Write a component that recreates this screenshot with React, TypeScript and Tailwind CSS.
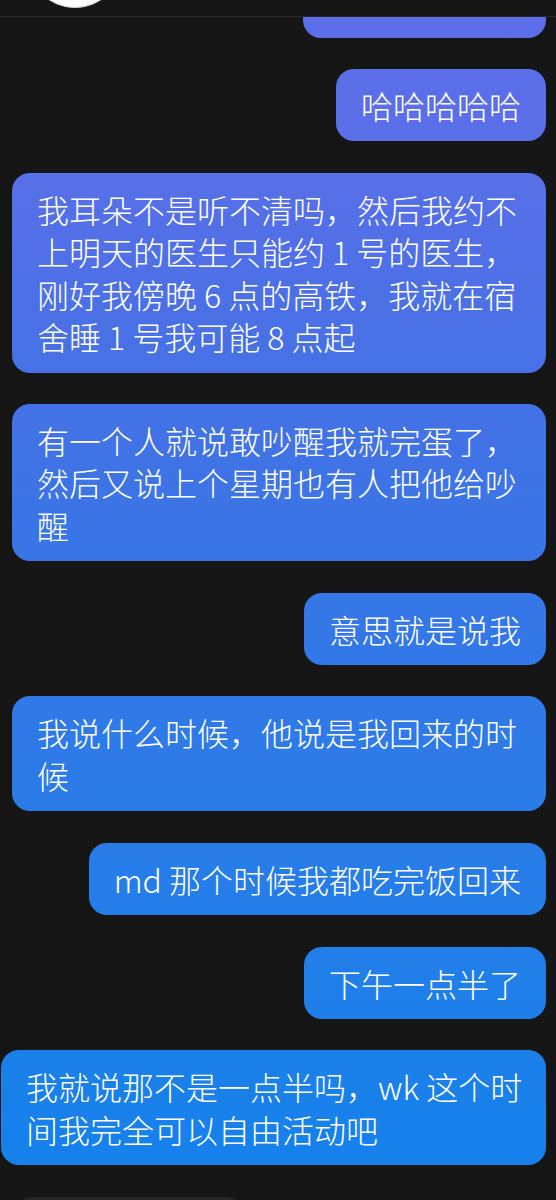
import React from 'react'

type Msg = {
  side: 'left' | 'right'
  lines: string[]
  wide?: boolean
}

const messages: Msg[] = [
  { side: 'right', lines: ['哈哈哈哈哈'] },
  {
    side: 'left',
    lines: [
      '我耳朵不是听不清吗，然后我约不',
      '上明天的医生只能约 1 号的医生，',
      '刚好我傍晚 6 点的高铁，我就在宿',
      '舍睡 1 号我可能 8 点起',
    ],
  },
  {
    side: 'left',
    lines: ['有一个人就说敢吵醒我就完蛋了，', '然后又说上个星期也有人把他给吵', '醒'],
  },
  { side: 'right', lines: ['意思就是说我'] },
  { side: 'left', lines: ['我说什么时候，他说是我回来的时', '候'] },
  { side: 'right', lines: ['md 那个时候我都吃完饭回来'] },
  { side: 'right', lines: ['下午一点半了'] },
  {
    side: 'left',
    wide: true,
    lines: ['我就说那不是一点半吗，wk 这个时', '间我完全可以自由活动吧'],
  },
]

// fixed gradient so bubble colour depends on screen position, like iOS
const bubbleBg =
  'bg-fixed bg-[linear-gradient(to_bottom,#5c6ee9_0%,#5a6fe8_12%,#4c70e6_25%,#3c74e6_42%,#3278e8_55%,#2b7be8_66%,#237ee9_78%,#1a80ea_90%,#1482ec_100%)]'

const Bubble = ({ msg }: { msg: Msg }) => {
  const place =
    msg.side === 'right'
      ? 'self-end w-fit'
      : msg.wide
        ? 'ml-px w-[545px]'
        : 'ml-3 w-[534px]'
  return (
    <div
      className={`${place} ${bubbleBg} shrink-0 rounded-[18px] px-[25px] py-[15px] text-[32px] font-light leading-[42.5px] text-white`}
    >
      {msg.lines.map((l, i) => (
        <div key={i} className="whitespace-nowrap">
          {l}
        </div>
      ))}
    </div>
  )
}

export default function App() {
  return (
    <div
      className="flex h-[1200px] w-full flex-col overflow-hidden bg-[#161616]"
      style={{ fontFamily: '"Noto Sans CJK SC", "Noto Sans", sans-serif' }}
    >
      <div className="relative h-[17px] shrink-0 overflow-hidden border-b border-[#2a2a2a]">
        <div className="absolute left-[27px] top-[-88px] h-[96px] w-[96px] rounded-full border border-[#cfcfcf] bg-white" />
      </div>
      <div className="flex min-h-0 flex-1 flex-col gap-[31.3px] overflow-hidden pr-[10px]">
        <div className={`-mt-[52px] h-[72.5px] w-[243px] shrink-0 self-end rounded-[18px] ${bubbleBg}`} />
        {messages.map((m, i) => (
          <Bubble key={i} msg={m} />
        ))}
        <div className="ml-[15px] h-[72px] w-[230px] shrink-0 rounded-[18px] bg-[#262626]" />
      </div>
    </div>
  )
}
